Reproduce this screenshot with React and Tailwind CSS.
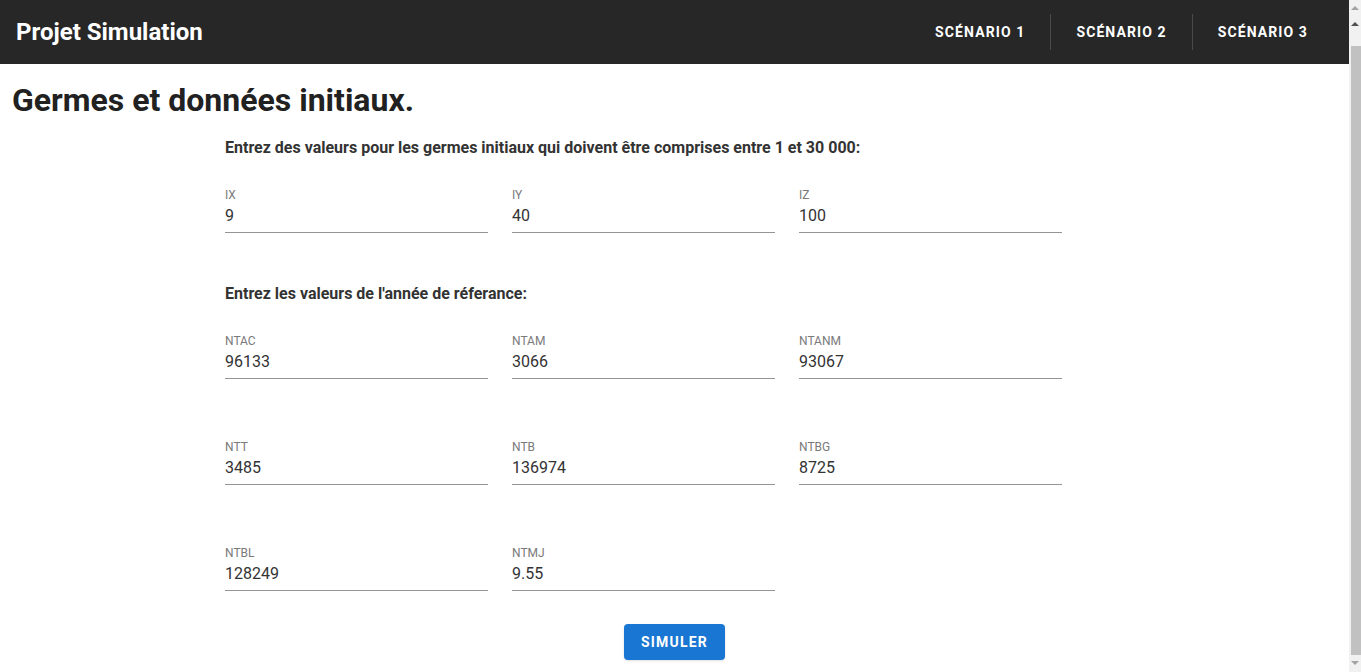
import React from "react";

const rows = [
  [
    { label: "NTAC", value: "96133" },
    { label: "NTAM", value: "3066" },
    { label: "NTANM", value: "93067" },
  ],
  [
    { label: "NTT", value: "3485" },
    { label: "NTB", value: "136974" },
    { label: "NTBG", value: "8725" },
  ],
  [
    { label: "NTBL", value: "128249" },
    { label: "NTMJ", value: "9.55" },
  ],
];

const germes = [
  { label: "IX", value: "9" },
  { label: "IY", value: "40" },
  { label: "IZ", value: "100" },
];

function Field({ label, value }) {
  return (
    <div className="w-[263px]">
      <div className="text-[12px] leading-[14px] text-[#7a7a7a]">{label}</div>
      <div className="mt-[2px] border-b border-[#949494] pb-[4px] text-[16px] leading-[24px] text-[#333]">
        {value}
      </div>
    </div>
  );
}

function FieldRow({ items }) {
  return (
    <div className="grid grid-cols-[263px_263px_263px] gap-x-6">
      {items.map(f => (
        <Field key={f.label} label={f.label} value={f.value} />
      ))}
    </div>
  );
}

// window scrollbar as seen in the screenshot
function Scrollbar() {
  return (
    <div className="flex h-screen w-3 shrink-0 flex-col items-center bg-[#f1f1f1]">
      <div className="mt-[6px] h-0 w-0 border-x-[4px] border-b-[4px] border-x-transparent border-b-[#a3a3a3]" />
      <div className="mt-[12px] h-0 w-0 border-x-[4px] border-b-[4px] border-x-transparent border-b-[#505050]" />
      <div className="ml-[2px] mt-[20px] w-[10px] flex-1 bg-[#c1c1c1]" />
      <div className="mb-[7px] mt-[6px] h-0 w-0 border-x-[4px] border-t-[4px] border-x-transparent border-t-[#a3a3a3]" />
    </div>
  );
}

export default function App() {
  const nav = ["SCÉNARIO 1", "SCÉNARIO 2", "SCÉNARIO 3"];
  return (
    <div className="flex h-screen overflow-hidden bg-white font-['Roboto',sans-serif] text-[#212121]">
      <div className="flex-1">
        {/* Top bar */}
        <header className="flex h-16 items-center justify-between bg-[#272727] pl-4 pr-4">
          <div className="text-[24px] font-bold text-white">Projet Simulation</div>
          <nav className="flex items-center">
            {nav.map((n, i) => (
              <div
                key={n}
                className={
                  "flex h-9 items-center px-[25px] text-[14px] font-bold tracking-[1.1px] text-white " +
                  (i > 0 ? "border-l border-[#4a4a4a]" : "")
                }
              >
                {n}
              </div>
            ))}
          </nav>
        </header>

        <main className="pb-10">
          <h1 className="mt-[18px] pl-3 text-[32px] font-bold leading-[37px] text-[#212121]">
            Germes et données initiaux.
          </h1>

          <div className="mx-auto w-[899px]">
            <p className="mt-[17px] text-[16px] font-bold leading-[24px] text-[#333]">
              Entrez des valeurs pour les germes initiaux qui doivent être comprises entre 1 et 30 000:
            </p>
            <div className="mt-[28px]">
              <FieldRow items={germes} />
            </div>

            <p className="mt-[49px] text-[16px] font-bold leading-[24px] text-[#333]">
              Entrez les valeurs de l'année de réferance:
            </p>
            <div className="mt-[28px] flex flex-col gap-y-[61px]">
              {rows.map((r, i) => (
                <FieldRow key={i} items={r} />
              ))}
            </div>

            <div className="mt-[33px] flex justify-center">
              <button className="h-9 w-[101px] rounded bg-[#1976d2] text-[14px] font-bold tracking-[1.2px] text-white shadow-sm">
                SIMULER
              </button>
            </div>
          </div>
        </main>
      </div>
      <Scrollbar />
    </div>
  );
}
